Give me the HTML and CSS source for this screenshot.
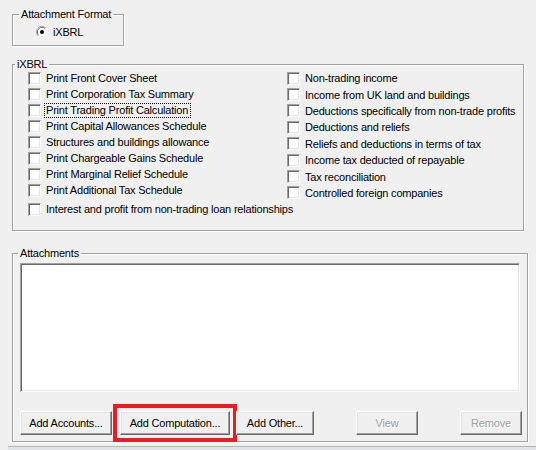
FILE: index.html
```html
<!DOCTYPE html>
<html lang="en">
<head>
    <meta charset="UTF-8">
    <meta name="viewport" content="width=device-width, initial-scale=1.0">
    <title>Attachments</title>
    <link rel="stylesheet" href="styles.css">
</head>
<body>
    <fieldset class="group format-group">
        <legend>Attachment Format</legend>
        <label class="radio-row">
            <svg class="radio" width="12" height="12" viewBox="0 0 12 12">
                <path d="M2.11 9.89 A5.5 5.5 0 0 1 9.89 2.11" fill="none" stroke="#a0a0a0"/>
                <path d="M9.89 2.11 A5.5 5.5 0 0 1 2.11 9.89" fill="none" stroke="#ffffff"/>
                <path d="M2.82 9.18 A4.5 4.5 0 0 1 9.18 2.82" fill="none" stroke="#696969"/>
                <path d="M9.18 2.82 A4.5 4.5 0 0 1 2.82 9.18" fill="none" stroke="#e3e3e3"/>
                <circle cx="6" cy="6" r="4" fill="#ffffff"/>
                <circle cx="6" cy="6" r="2" fill="#000000"/>
            </svg>
            iXBRL
        </label>
    </fieldset>

    <fieldset class="group ixbrl-group">
        <legend>iXBRL</legend>
        <div class="check-columns">
            <div class="check-list">
                <label class="check-row"><span class="check"></span>Print Front Cover Sheet</label>
                <label class="check-row"><span class="check"></span>Print Corporation Tax Summary</label>
                <label class="check-row"><span class="check"></span><span class="focus">Print Trading Profit Calculation</span></label>
                <label class="check-row"><span class="check"></span>Print Capital Allowances Schedule</label>
                <label class="check-row"><span class="check"></span>Structures and buildings allowance</label>
                <label class="check-row"><span class="check"></span>Print Chargeable Gains Schedule</label>
                <label class="check-row"><span class="check"></span>Print Marginal Relief Schedule</label>
                <label class="check-row"><span class="check"></span>Print Additional Tax Schedule</label>
            </div>
            <div class="check-list check-list-right">
                <label class="check-row"><span class="check"></span>Non-trading income</label>
                <label class="check-row"><span class="check"></span>Income from UK land and buildings</label>
                <label class="check-row"><span class="check"></span>Deductions specifically from non-trade profits</label>
                <label class="check-row"><span class="check"></span>Deductions and reliefs</label>
                <label class="check-row"><span class="check"></span>Reliefs and deductions in terms of tax</label>
                <label class="check-row"><span class="check"></span>Income tax deducted of repayable</label>
                <label class="check-row"><span class="check"></span>Tax reconciliation</label>
                <label class="check-row"><span class="check"></span>Controlled foreign companies</label>
            </div>
        </div>
        <label class="check-row check-row-wide"><span class="check"></span>Interest and profit from non-trading loan relationships</label>
    </fieldset>

    <fieldset class="group attach-group">
        <legend>Attachments</legend>
        <div class="listbox"></div>
        <div class="button-row">
            <button class="btn btn-accounts">Add Accounts...</button>
            <button class="btn btn-computation">Add Computation...</button>
            <button class="btn btn-other">Add Other...</button>
            <button class="btn btn-view" disabled>View</button>
            <button class="btn btn-remove" disabled>Remove</button>
        </div>
    </fieldset>

    <div class="statusbar"></div>
</body>
</html>
```

FILE: styles.css
```css
body {
    margin: 0;
    background-color: #f0f0f0;
    font-family: "Liberation Sans", Arial, sans-serif;
    font-size: 11px;
    letter-spacing: -0.2px;
    color: #000;
    overflow: hidden;
}

/* Group boxes */
.group {
    box-sizing: border-box;
    margin: 0 0 0 12px;
    padding: 0;
    min-width: 0;
    border: 1px solid #a0a0a0;
    box-shadow: inset 1px 1px 0 #fff, 1px 1px 0 #fff;
}

.group legend {
    padding: 0 2px;
    line-height: 12px;
}

.format-group {
    width: 112px;
    margin-top: 8px;
}

.format-group legend {
    margin-left: 6px;
}

.ixbrl-group {
    width: 512px;
    margin-top: 12px;
    padding-bottom: 13px;
}

.ixbrl-group legend {
    margin-left: 2px;
}

.attach-group {
    width: 516px;
    margin-top: 16px;
}

.attach-group legend {
    margin-left: 5px;
}

/* Radio */
.radio-row {
    display: flex;
    align-items: center;
    height: 13px;
    padding: 5px 0 7px 23px;
}

.radio {
    margin-right: 5px;
}

/* Checkboxes */
.check-columns {
    display: flex;
    padding-left: 15px;
}

.check-list {
    flex: none;
    width: 259px;
}

.check-list-right {
    width: auto;
}

.check-list-right .check-row {
    height: 16.4px;
}

.check-row {
    display: flex;
    align-items: center;
    height: 16px;
    white-space: nowrap;
}

.check-row-wide {
    padding-left: 15px;
}

.check {
    box-sizing: border-box;
    width: 13px;
    height: 13px;
    margin-right: 5px;
    background: #fff;
    border: 1px solid;
    border-color: #a0a0a0 #fff #fff #a0a0a0;
    box-shadow: inset 1px 1px 0 #696969, inset -1px -1px 0 #e3e3e3;
    flex-shrink: 0;
}

.focus {
    outline: 1px dotted #000;
    line-height: 13px;
    padding: 0 2px 0 1px;
    margin-left: -1px;
}

/* List */
.listbox {
    box-sizing: border-box;
    width: 500px;
    height: 129px;
    margin: 4px 0 0 7px;
    background: #fff;
    border: 1px solid;
    border-color: #a0a0a0 #fff #fff #a0a0a0;
    box-shadow: inset 1px 1px 0 #696969, inset -1px -1px 0 #e3e3e3;
}

/* Buttons */
.button-row {
    display: flex;
    margin: 19px 0 6px 7px;
}

.btn {
    box-sizing: border-box;
    height: 24px;
    padding: 0;
    font-family: inherit;
    font-size: 11px;
    letter-spacing: -0.2px;
    color: #000;
    background: #f0f0f0;
    border: 1px solid;
    border-color: #fff #696969 #696969 #fff;
    box-shadow: inset -1px -1px 0 #a0a0a0, inset 1px 1px 0 #e3e3e3;
}

.btn:disabled {
    color: #a0a0a0;
    text-shadow: 1px 1px 0 #fff;
}

.btn-accounts {
    width: 92px;
}

.btn-computation {
    width: 110px;
    margin-left: 8px;
    outline: 4px solid #ed1c24;
    outline-offset: 3px;
}

.btn-other {
    width: 78px;
    margin-left: 6px;
}

.btn-view {
    width: 62px;
    margin-left: 42px;
}

.btn-remove {
    width: 62px;
    margin-left: 42px;
}

.statusbar {
    height: 4px;
    margin: 4px 0 0 8px;
    border-top: 1px solid #b4b4b4;
    background: #dfe3e8;
}
```
